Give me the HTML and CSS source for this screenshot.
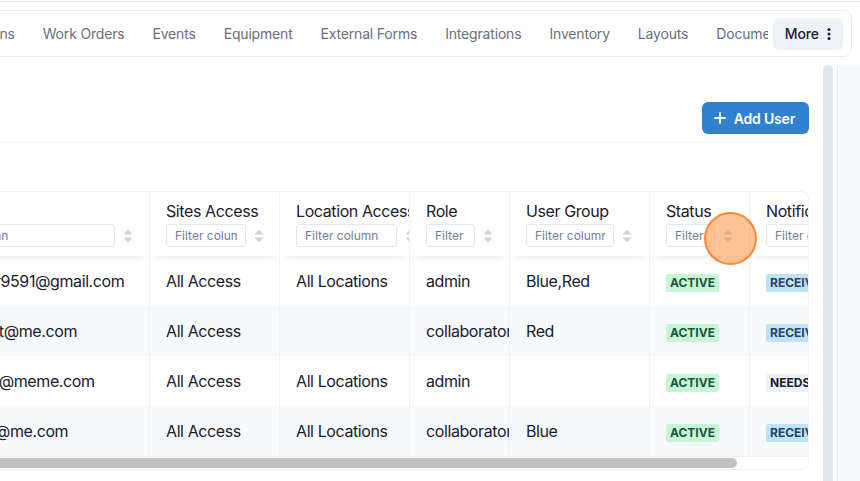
FILE: index.html
```html
<!DOCTYPE html>
<html lang="en">
<head>
<meta charset="utf-8">
<title>Users</title>
<link rel="stylesheet" href="styles.css">
</head>
<body>
<div class="topline"></div>
<nav class="tabsbar">
  <div class="tabs">
    <a class="tab" href="#">Locations</a>
    <a class="tab" href="#">Work Orders</a>
    <a class="tab" href="#">Events</a>
    <a class="tab" href="#">Equipment</a>
    <a class="tab" href="#">External Forms</a>
    <a class="tab" href="#">Integrations</a>
    <a class="tab" href="#">Inventory</a>
    <a class="tab" href="#">Layouts</a>
    <a class="tab" href="#">Documents</a>
  </div>
  <button class="more">More
    <svg class="dots" width="16" height="16" viewBox="0 0 16 16"><circle cx="8" cy="3.5" r="1.5"/><circle cx="8" cy="8" r="1.5"/><circle cx="8" cy="12.5" r="1.5"/></svg>
  </button>
</nav>
<div class="workspace">
  <main class="content">
    <div class="page-head">
      <button class="btn-primary">
        <svg width="12" height="12" viewBox="0 0 12 12"><path d="M6 1v10M1 6h10" stroke="#fff" stroke-width="1.8" stroke-linecap="round"/></svg>
        Add User
      </button>
    </div>
    <div class="table-wrap">
      <table class="grid">
        <thead>
          <tr>
            <th class="w-email"><div class="th-title">Email</div><div class="filter"><input class="f-email" placeholder="Filter column"><svg class="sort" viewBox="0 0 10 14"><path d="M5 .5 9.5 5.5H.5Z M.5 8.5H9.5L5 13.5Z"/></svg></div></th>
            <th class="w-sites"><div class="th-title">Sites Access</div><div class="filter"><input class="f-sites" placeholder="Filter column"><svg class="sort" viewBox="0 0 10 14"><path d="M5 .5 9.5 5.5H.5Z M.5 8.5H9.5L5 13.5Z"/></svg></div></th>
            <th class="w-loc"><div class="th-title">Location Access</div><div class="filter"><input class="f-loc" placeholder="Filter column"><svg class="sort" viewBox="0 0 10 14"><path d="M5 .5 9.5 5.5H.5Z M.5 8.5H9.5L5 13.5Z"/></svg></div></th>
            <th class="w-role"><div class="th-title">Role</div><div class="filter"><input class="f-role" placeholder="Filter column"><svg class="sort" viewBox="0 0 10 14"><path d="M5 .5 9.5 5.5H.5Z M.5 8.5H9.5L5 13.5Z"/></svg></div></th>
            <th class="w-group"><div class="th-title">User Group</div><div class="filter"><input class="f-group" placeholder="Filter column"><svg class="sort" viewBox="0 0 10 14"><path d="M5 .5 9.5 5.5H.5Z M.5 8.5H9.5L5 13.5Z"/></svg></div></th>
            <th class="w-status"><div class="th-title">Status</div><div class="filter"><input class="f-status" placeholder="Filter column"><svg class="sort" viewBox="0 0 10 14"><path d="M5 .5 9.5 5.5H.5Z M.5 8.5H9.5L5 13.5Z"/></svg></div></th>
            <th class="w-notif"><div class="th-title">Notifications</div><div class="filter"><input class="f-notif" placeholder="Filter column"><svg class="sort" viewBox="0 0 10 14"><path d="M5 .5 9.5 5.5H.5Z M.5 8.5H9.5L5 13.5Z"/></svg></div></th>
            <th class="w-actions"><div class="th-title">Actions</div></th>
          </tr>
        </thead>
        <tbody>
          <tr>
            <td>jacobmiler9591@gmail.com</td>
            <td>All Access</td>
            <td>All Locations</td>
            <td>admin</td>
            <td>Blue,Red</td>
            <td><span class="badge badge-green">Active</span></td>
            <td><span class="badge badge-blue">Receiving</span></td>
            <td></td>
          </tr>
          <tr>
            <td>james.scot@me.com</td>
            <td>All Access</td>
            <td></td>
            <td>collaborator</td>
            <td>Red</td>
            <td><span class="badge badge-green">Active</span></td>
            <td><span class="badge badge-blue">Receiving</span></td>
            <td></td>
          </tr>
          <tr>
            <td>robmarley@meme.com</td>
            <td>All Access</td>
            <td>All Locations</td>
            <td>admin</td>
            <td></td>
            <td><span class="badge badge-green">Active</span></td>
            <td><span class="badge badge-gray">Needs setup</span></td>
            <td></td>
          </tr>
          <tr>
            <td>davismith@me.com</td>
            <td>All Access</td>
            <td>All Locations</td>
            <td>collaborator</td>
            <td>Blue</td>
            <td><span class="badge badge-green">Active</span></td>
            <td><span class="badge badge-blue">Receiving</span></td>
            <td></td>
          </tr>
        </tbody>
      </table>
      <div class="hscroll"><div class="thumb"></div></div>
    </div>
  </main>
  <div class="vscroll"></div>
  <aside class="side"></aside>
</div>
<div class="click-marker"></div>
</body>
</html>
```
FILE: styles.css
```css
* { box-sizing: border-box; }
html, body { margin: 0; }
body {
  width: 860px;
  height: 481px;
  overflow: hidden;
  font-family: Inter, "Noto Sans", sans-serif;
  color: #1a202c;
  background: #fff;
}
.topline { height: 2px; border-bottom: 1px solid #e5e7eb; }

.tabsbar {
  display: flex;
  align-items: center;
  height: 47px;
  margin: 8px 8px 0 -100px;
  padding: 0 8px 0 51px;
  border: 1px solid #e9edf1;
  border-radius: 8px;
  background: #fff;
}
.tabs {
  flex: 1 1 0;
  min-width: 0;
  display: flex;
  gap: 28px;
  overflow: hidden;
  white-space: nowrap;
}
.tab {
  flex: none;
  font-size: 14px;
  line-height: 20px;
  letter-spacing: -0.18px;
  color: #667080;
  text-decoration: none;
}
.more {
  flex: none;
  margin-left: 5px;
  display: flex;
  align-items: center;
  gap: 2px;
  height: 32px;
  padding: 0 6px 0 12px;
  border: 0;
  border-radius: 6px;
  background: #edf2f7;
  font: 500 14px Inter, "Noto Sans", sans-serif;
  letter-spacing: -0.1px;
  color: #1a202c;
}
.dots { fill: #1a202c; }

.workspace { display: flex; height: 416px; margin-top: 8px; }
.content { flex: 1 1 0; min-width: 0; margin-left: -91px; }
.vscroll {
  flex: 0 0 10px;
  margin-left: 14px;
  background: #e2e8f0;
  border-radius: 5px 5px 0 0;
}
.side {
  flex: 0 0 23px;
  margin-left: 4px;
  border-left: 1px solid #e5e7eb;
  background: #f9fafb;
}

.page-head {
  display: flex;
  justify-content: flex-end;
  padding: 37px 0 8px;
  border-bottom: 1px solid #edf2f7;
}
.btn-primary {
  display: inline-flex;
  align-items: center;
  gap: 8px;
  height: 32px;
  padding: 0 14px 0 12px;
  border: 0;
  border-radius: 6px;
  background: #3182ce;
  color: #fff;
  font: 600 14px Inter, "Noto Sans", sans-serif;
  letter-spacing: -0.2px;
}

.table-wrap {
  margin-top: 48px;
  border: 1px solid #edf2f7;
  border-radius: 8px;
  overflow: hidden;
}
.grid {
  table-layout: fixed;
  border-collapse: separate;
  border-spacing: 0;
  width: 1100px;
}
.grid th {
  padding: 8px 16px 9px;
  text-align: left;
  vertical-align: top;
  font-weight: 400;
  font-size: 16px;
  letter-spacing: -0.4px;
  color: #1a202c;
  white-space: nowrap;
  overflow: hidden;
  border-right: 1px solid #edf2f7;
  background: #fff;
  box-shadow: 0 6px 8px -6px rgba(0, 0, 0, 0.12);
}
.th-title { line-height: 22px; margin-bottom: 2px; }
.filter { display: flex; align-items: center; gap: 8px; }
.filter input {
  flex: none;
  height: 23px;
  padding: 0 8px;
  border: 1px solid #e2e8f0;
  border-radius: 3px;
  font: 12px Inter, "Noto Sans", sans-serif;
  letter-spacing: 0;
  color: #1a202c;
  background: #fff;
}
.filter input::placeholder { color: #718096; }
.sort { flex: none; width: 10px; height: 14px; fill: #cbd5e0; }

.w-email { width: 240px; }
.w-sites { width: 130px; }
.w-loc { width: 130px; }
.w-role { width: 100px; }
.w-group { width: 140px; }
.w-status { width: 100px; }
.w-notif { width: 160px; }
.w-actions { width: 100px; }
.f-email { width: 189px; }
.f-sites { width: 80px; }
.f-loc { width: 101px; }
.f-role { width: 49px; }
.f-group { width: 88px; }
.f-status { width: 49px; }
.f-notif { width: 90px; }

.grid td {
  padding: 13px 16px;
  font-size: 16px;
  line-height: 24px;
  letter-spacing: -0.4px;
  white-space: nowrap;
  overflow: hidden;
  border-right: 1px solid #edf2f7;
}
.grid tbody tr:nth-child(even) td { background: #f7fafc; }

.badge {
  display: inline-block;
  padding: 0 4px;
  border-radius: 2px;
  font-size: 12px;
  font-weight: 700;
  line-height: 18px;
  letter-spacing: 0;
  text-transform: uppercase;
}
.badge-green { background: #c6f6d5; color: #22543d; }
.badge-blue { background: #bee3f8; color: #2a4365; }
.badge-gray { background: #edf2f7; color: #1a202c; }

.hscroll { border-top: 1px solid #edf2f7; padding: 1px 2px; }
.thumb { width: 825px; height: 10px; border-radius: 5px; background: #c1c1c1; }

.click-marker {
  position: absolute;
  left: 704px;
  top: 212px;
  width: 53px;
  height: 53px;
  border-radius: 50%;
  background: rgba(251, 146, 60, 0.55);
  border: 2px solid rgba(249, 115, 22, 0.75);
}
```
